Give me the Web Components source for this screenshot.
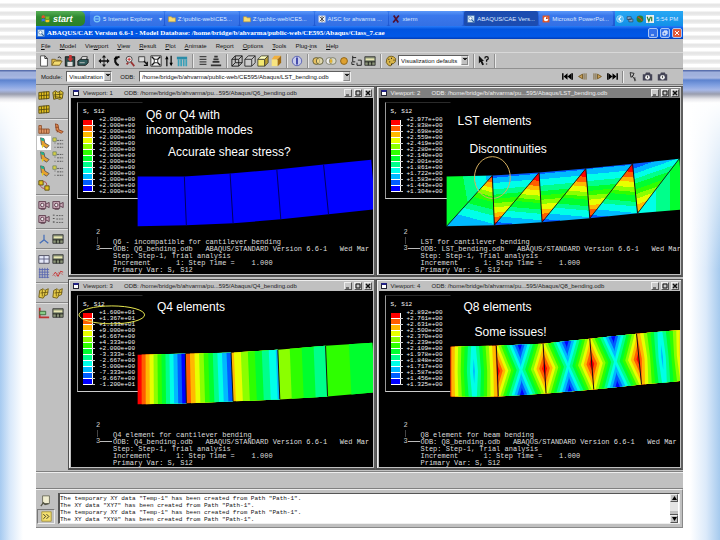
<!DOCTYPE html>
<html lang="en">
<head>
<meta charset="utf-8">
<title>ABAQUS/CAE stress comparison</title>
<style>
body { margin: 0; font-family: "Liberation Sans", Arial, sans-serif; }
</style>
</head>
<body>
<slide-page>
  <app-window>
    <task-bar slot="tasks"></task-bar>
    <title-bar slot="title">ABAQUS/CAE Version 6.6-1 - Model Database: /home/bridge/b/ahvarma/public-web/CE595/Abaqus/Class_7.cae</title-bar>
    <menu-bar slot="bars"></menu-bar>
    <tool-bar slot="bars"></tool-bar>
    <context-bar slot="bars"></context-bar>
    <tool-box slot="tools"></tool-box>
    <view-port number="1" file="Q6" plot="flat" desc="Q6 - incompatible for cantilever bending" version="6.6-1"
      legend="+2.000e+00 +2.000e+00 +2.000e+00 +2.000e+00 +2.000e+00 +2.000e+00 +2.000e+00 +2.000e+00 +2.000e+00 +2.000e+00 +2.000e+00 +2.000e+00 +2.000e+00">
      <slide-note style="--x:75px;--y:10px">Q6 or Q4 with<br>incompatible modes</slide-note>
      <slide-note style="--x:97px;--y:47px">Accurate shear stress?</slide-note>
    </view-port>
    <view-port number="2" file="LST" plot="lst" active desc="LST for cantilever bending" version="6.6-1"
      legend="+2.977e+00 +2.838e+00 +2.698e+00 +2.559e+00 +2.419e+00 +2.280e+00 +2.140e+00 +2.001e+00 +1.861e+00 +1.722e+00 +1.583e+00 +1.443e+00 +1.304e+00">
      <slide-note style="--x:79px;--y:16px">LST elements</slide-note>
      <slide-note style="--x:91px;--y:44px">Discontinuities</slide-note>
    </view-port>
    <view-port number="3" file="Q4" plot="linear" desc="Q4 element for cantilever bending" version="6.6-1"
      legend="+1.600e+01 +1.367e+01 +1.133e+01 +9.000e+00 +6.667e+00 +4.333e+00 +2.000e+00 -3.333e-01 -2.667e+00 -5.000e+00 -7.333e+00 -9.667e+00 -1.200e+01">
      <slide-note style="--x:86px;--y:9px">Q4 elements</slide-note>
    </view-port>
    <view-port number="4" file="Q8" plot="quadratic" desc="Q8 element for beam bending" version="6.6-1"
      legend="+2.892e+00 +2.761e+00 +2.631e+00 +2.500e+00 +2.370e+00 +2.239e+00 +2.109e+00 +1.978e+00 +1.848e+00 +1.717e+00 +1.587e+00 +1.456e+00 +1.325e+00">
      <slide-note style="--x:85px;--y:9px">Q8 elements</slide-note>
      <slide-note style="--x:96px;--y:34px">Some issues!</slide-note>
    </view-port>
    <message-area slot="log">The temporary XY data "Temp-1" has been created from Path "Path-1".
The XY data "XY7" has been created from Path "Path-1".
The temporary XY data "Temp-1" has been created from Path "Path-1".
The XY data "XY8" has been created from Path "Path-1".</message-area>
  </app-window>
</slide-page>

<script>
const RAMP = ['#ff0000','#ff5d00','#ffb900','#e8ff00','#8bff00','#2eff00','#00ff2e','#00ff8b','#00ffe8','#00b9ff','#005dff','#0000ff'];

const define = (name, html, setup) => customElements.define(name, class extends HTMLElement {
  connectedCallback() {
    if (this.shadowRoot) return;
    const root = this.attachShadow({ mode: 'open' });
    root.innerHTML = typeof html === 'function' ? html(this) : html;
    if (setup) setup(this, root);
  }
});

/* 14 x 14 glyphs */
const K = 'stroke="#111" fill="none"';
const ICONS = {
  page: `<path d="M3 1h5l3 3v9H3z" fill="#fff" stroke="#444"/><path d="M8 1v3h3" ${K}/>`,
  open: `<path d="M1 12V5h4l1 1h5v2" fill="#e8c048" stroke="#776020"/><path d="M1 12l3-5h9l-3 5z" fill="#f4dc70" stroke="#776020"/><path d="M8 3q2-2 4 1" ${K}/>`,
  save: `<path d="M1.500 2h11v11h-11z" fill="#2d4a48" stroke="#111"/><path d="M4 8h6v5H4z" fill="#ddd"/><path d="M6 0h3v4h2L7.500 8 4 4h2z" fill="#c33"/>`,
  print: `<path d="M4 6l2-4h6l-1 4" fill="#fff" stroke="#222"/><path d="M1 7l3-2h9v4l-3 3H1z" fill="#2f5c5c" stroke="#111"/><path d="M3 9h6" stroke="#ccc"/>`,
  pan: `<path d="M7 0l2.500 3h-2v3h3V4l3 3-3 3V8h-3v3h2L7 14l-2.500-3h2V8h-3v2l-3-3 3-3v2h3V3h-2z" fill="#111"/>`,
  rotate: `<path d="M10 2Q4 3 5 8q1 3 4 4" stroke="#111" stroke-width="2.500" fill="none"/><path d="M3 5l3-4 2 4z"/>`,
  magnify: `<circle cx="6" cy="5" r="3.500" fill="#eee" stroke="#333"/><path d="M6 3v4M4 5h4" stroke="#c22"/><path d="M8 8l4 5M3 11l2-2" stroke="#933" stroke-width="2"/>`,
  boxzoom: `<path d="M2 2h7v6H2z" fill="#ddd" stroke="#333"/><path d="M8 7l4 4M12 8v4H8" stroke="#111" stroke-width="1.500" fill="none"/>`,
  fit: `<path d="M1 1h12v12H1z" fill="#eee" stroke="#222"/><path d="M2 2l10 10M12 2L2 12" stroke="#111" stroke-width="1.500"/><path d="M5 5h4v4H5z" fill="#fff" stroke="#222"/>`,
  cycle: `<path d="M4.500 13V3M9.500 1v10" stroke="#111" stroke-width="1.500"/><path d="M2.500 5l2-4 2 4zM7.500 9l2 4 2-4z"/>`,
  views: `<path d="M1 2h12v3H1z" fill="#2a8ca8"/><path d="M3 5v8M6 5v8M9 5v8M12 5v8" stroke="#3aa0b8" stroke-width="2"/>`,
  list: `<path d="M3 2h8M3 5h8M3 8h8M3 11h8" stroke="#444" stroke-width="1.500"/>`,
  persp: `<path d="M5 2h4M4 5h6M3 8h8M1 12h12" stroke="#333" stroke-width="2"/>`,
  wire: `<path d="M1 5h8v8H1zM5 1h8v8H5zM1 5l4-4M9 5l4-4M1 13l4-4M9 13l4-4" ${K}/>`,
  hidden: `<path d="M1 5h8v8H1zM1 5l4-4h8v8l-4 4M9 5l4-4" stroke="#222" fill="#ccc"/>`,
  filled: `<path d="M1 5h8v8H1z" fill="#f4e870" stroke="#443"/><path d="M1 5l4-4h8L9 5z" fill="#ffffc0" stroke="#443"/><path d="M9 5l4-4v8l-4 4z" fill="#b89c30" stroke="#443"/>`,
  shaded: `<path d="M2 5h7v8H2z" fill="#f8e480"/><path d="M2 5l3-4h8L9 5z" fill="#f0b040"/><path d="M9 5l4-4v8l-4 4z" fill="#a06a10"/>`,
  info: `<circle cx="7" cy="7" r="5.500" fill="#c8ccec" stroke="#5058b0"/><path d="M7 3v8" stroke="#3038a0" stroke-width="2"/>`,
  union: `<circle cx="5" cy="7" r="4" fill="#e8c060" stroke="#553"/><circle cx="9" cy="7" r="4" fill="#f4e4a0" fill-opacity=".6" stroke="#553"/>`,
  inter: `<circle cx="5" cy="7" r="4" fill="#eee" stroke="#776"/><circle cx="9" cy="7" r="4" fill="#eec" fill-opacity=".6" stroke="#776"/><path d="M7 4q3 3 0 6-3-3 0-6" fill="#e0b030"/>`,
  ball: `<circle cx="7" cy="7" r="4" fill="#dda030" stroke="#865c10"/>`,
  swap: `<path d="M2 1v7h3M2 3h4M8 6h4v6H7V9" ${K}/><path d="M4 11H1V8" ${K}/>`,
  table: `<path d="M1 2h12v10H1z" fill="#8a9478" stroke="#333"/><path d="M2 4h10v2H2z" fill="#e8e4b0"/><path d="M1 8h12M5 8v4M9 8v4" ${K}/>`,
  palette: `<path d="M2 5q2-5 8-3 4 2 2 6-2 3-4 2 0 4-4 2-4-3-2-7" fill="#d8b448" stroke="#6b5410"/><path d="M4 5h1M7 4h1M10 6h1M5 8h1M7 11h1" stroke="#222" stroke-width="1.500"/>`,
  help: `<path d="M1 1l6 6H5l2 4-2 1-2-4-2 2z" fill="#111"/><path d="M8 4q0-2 2-2t2 2q0 1-2 2v2M10 10v1" stroke="#111" stroke-width="1.500" fill="none"/>`,
  first: `<path d="M1 3v8M13 3v8" stroke="#111" stroke-width="2"/><path d="M2 7l5-4v8zM7 7l5-4v8z"/>`,
  last: `<path d="M1 3v8M13 3v8" stroke="#111" stroke-width="2"/><path d="M12 7L7 3v8zM7 7L2 3v8z"/>`,
  prev: `<path d="M2 7l5-3v6z" fill="#c8a058" stroke="#6b4c10"/><path d="M9 3v8M11.500 3v8" stroke="#6b4c10"/>`,
  next: `<path d="M12 7L7 4v6z" fill="#c8a058" stroke="#6b4c10"/><path d="M5 3v8M2.500 3v8" stroke="#6b4c10"/>`,
  probe: `<path d="M4 2l5 1-2 4 4 5M4 2l1 6 3-2M10 8v5" ${K}/>`,
  camera: `<path d="M1 4h3l1-2h5l1 2h2v8H1z" fill="#445"/><circle cx="7" cy="8" r="3" fill="#eee"/><path d="M7 6v3" stroke="#333"/>`,
  mesh: `<path d="M1 4l12-1v8L1 12z" fill="#e4c020" stroke="#54480c"/><path d="M1 8l12-1M4 4v8M7 3v9M10 3v9" stroke="#54480c"/>`,
  meshes: `<path d="M1 4l3-2 3 2 3-2 3 2-1 7-3 1-3-1-4 1z" fill="#e4c83a" stroke="#54480c"/><path d="M2 7l10-1M4 3v8M9 3v8M3 9l8 1" stroke="#54480c"/>`,
  deform: `<path d="M2 4l4-2 2 2 4-2-1 7-3 1-2 3-5-1z" fill="#e8cc48" stroke="#6b5810"/><path d="M3 7l9-1M5 3v8M9 4L7 11" stroke="#6b5810"/>`,
  beam: `<path d="M1 3v9h12V7H4V3z" fill="#e09868" stroke="#8a4c28"/><path d="M4 7v5M7 7v5M10 7v5M1 7h3" stroke="#8a4c28"/>`,
  bent: `<path d="M4 1l3 1 1 6 5 2-2 2-6-3z" fill="#e08c50" stroke="#8a4020"/><path d="M4 5h3M7 8l-1 3" stroke="#8a4020"/>`,
  contour: `<path d="M3 1l4 1 1 5 5 3-3 3-6-4z" fill="#e8a030" stroke="#555"/><path d="M3 1l4 1v3L4 4z" fill="#20b090"/><path d="M4 9l3 1-2 3z" fill="#e8d020"/>`,
  opts: `<path d="M1 1h4v4H1z" fill="#d8d040" stroke="#786"/><path d="M6 4h7M6 8h7M6 12h7" stroke="#444" stroke-dasharray="2 1"/><path d="M3 7h1M3 12h1" stroke="#444"/>`,
  link: `<path d="M1 2h5v5H1zM8 8h5v5H8z" fill="#e4c020" stroke="#54480c"/><path d="M6 3q5 0 4 5M3 7q0 4 5 4" stroke="#a44" fill="none"/>`,
  film: `<path d="M1 3h8v8H1zM9 6l4-2v6l-4-2" fill="#caaab8" stroke="#534"/><circle cx="5" cy="7" r="2" fill="#eee" stroke="#534"/><path d="M3 12h5" stroke="#534"/>`,
  dots: `<path d="M2 2v10" stroke="#333" stroke-dasharray="1 3" stroke-width="2"/><path d="M5 3h8M5 7h8M5 11h8" stroke="#555" stroke-dasharray="2 1"/>`,
  axes: `<path d="M7 2v6L2 12M7 8l5 4" stroke="#4870b8" stroke-width="1.500" fill="none"/>`,
  grid: `<path d="M1 3h12v9H1z" fill="#e4e8f8" stroke="#445"/><path d="M1 7h12M7 3v9" stroke="#557"/>`,
  lattice: `<path d="M2 1v12M5 1v12M8 1v12M11 1v12M1 3h12M1 6h12M1 9h12M1 12h12" stroke="#5464b0"/>`,
  curve: `<path d="M1 10l3-4 3 5 3-6 3 1" stroke="#c22" fill="none"/><path d="M1 8l3 3 4-5 5 3" stroke="#b77" fill="none"/>`,
  cut: `<path d="M2 1v11h11" stroke="#b33" stroke-width="2" fill="none"/><path d="M2 5h7v4H2z" fill="#8c8" stroke="#363"/>`,
  log: `<path d="M3 1h8v9H3z" fill="#f0edd0" stroke="#665"/><path d="M1 13l3-4 2 2 4-1" stroke="#554" fill="none" stroke-width="1.500"/>`,
  prompt: `<path d="M1 1h12v12H1z" fill="#f4e070" stroke="#a08c30"/><path d="M3 4l3 3-3 3M7 4l3 3-3 3" ${K}/>`,
  flag: `<path d="M1 3q3-2 5 0v4q-2-2-5 0z" fill="#e8502c"/><path d="M7 3q3 2 6 0v4q-3 2-6 0z" fill="#7cc02c"/><path d="M1 8q3-2 5 0v4q-2-2-5 0z" fill="#3c74e0"/><path d="M7 8q3 2 6 0v4q-3 2-6 0z" fill="#f8c820"/>`,
  ie: `<circle cx="7" cy="7" r="5" fill="none" stroke="#7cc8f8" stroke-width="2"/><path d="M3 7h8" stroke="#7cc8f8" stroke-width="2"/>`,
  folder: `<path d="M1 3h5l1 2h6v7H1z" fill="#f8dc70" stroke="#c09830"/>`,
  doc: `<path d="M1 1h12v12H1z" fill="#eee"/><path d="M3 3l8 8M11 3l-8 8M7 2v10" stroke="#444" stroke-width="1.500"/>`,
  xterm: `<path d="M3 1l8 12M12 1L2 13" stroke="#501030" stroke-width="3"/>`,
  cae: `<path d="M1 1h12v12H1z" fill="#d8ecf8" stroke="#3a6ca8"/><circle cx="6" cy="6" r="3" fill="#fff" stroke="#2860a0"/><path d="M8 8l4 4" stroke="#2860a0" stroke-width="2"/>`,
  ppt: `<path d="M1 1h12v12H1z" fill="#e05828"/><circle cx="7" cy="7" r="4" fill="#fff"/><path d="M7 7V4h3v3z" fill="#c03810"/>`,
  back: `<circle cx="7" cy="7" r="6" fill="#50b8f4" stroke="#d0ecff"/><path d="M9 3L5 7l4 4" stroke="#fff" stroke-width="2" fill="none"/>`,
  net: `<path d="M2 3h7v5H2zM5 7h7v5H5z" fill="#88a8c8" stroke="#234"/>`,
  globe: `<circle cx="7" cy="7" r="6" fill="#2c8030"/><path d="M3 3q5 2 8 7" stroke="#d84020" stroke-width="2" fill="none"/>`,
  vnc: `<path d="M0 0h14v14H0z" fill="#eee"/><path d="M2 3l3 8 3-8M10 3v8" stroke="#2a8030" stroke-width="2" fill="none"/>`
};

define('ui-icon', el => `<style>:host{display:block;width:var(--icon,12px);height:var(--icon,12px);flex:none}svg{display:block;width:100%;height:100%}</style>
<svg viewBox="0 0 14 14" aria-hidden="true">${ICONS[el.getAttribute('name')]}</svg>`);

define('slide-page', `<style>
:host{display:block;box-sizing:border-box;min-height:100vh;padding:11px 37px 12px 36px;
 background:
 linear-gradient(#5a70ae 0 1px,#9fb0dc 2px 5px,#a9b8e2 8px,#5c83cf 10px,#7f9fe0 15px,#a6b8e8 20px,#9a9eae 24px,#e8e8ec 29px,#fff 33px) 0 70px/100% 33px no-repeat,
 repeating-linear-gradient(#fff 0 3px,#e6e6e6 4px 6px,#f4f4f4 8px) 0 0/100% 70px no-repeat,
 linear-gradient(#fff 0,#fff0 170px) 0 100px/100% 170px no-repeat,
 linear-gradient(90deg,#a6caf0 0,#d8e8fa 10px,#fff 23px,#fff calc(100% - 30px),#dceafa calc(100% - 14px),#a6caee 100%)}
</style><slot></slot>`);

define('app-window', `<style>
:host{display:flex;flex-direction:column;min-height:calc(100vh - 23px);background:#c0c0c0}
.work{display:grid;grid-template-columns:32px 1fr;flex:1;border-top:1px solid #808080}
.views{display:grid;grid-template-columns:repeat(2,minmax(0,1fr));grid-auto-rows:1fr;background:#c0c0c0}
.prompt{height:16px;border-top:1px solid #808080;border-bottom:1px solid #808080;box-shadow:inset 0 1px #eee}
</style>
<slot name="tasks"></slot><slot name="title"></slot><slot name="bars"></slot>
<div class="work"><slot name="tools"></slot><div class="views"><slot></slot></div></div>
<div class="prompt"></div><slot name="log"></slot>`);

define('task-bar', () => {
  const items = [['ie','5 Internet Explorer','▾'],['folder','Z:\\public-web\\CE5...'],['folder','Z:\\public-web\\CE5...'],['doc','AISC for ahvarma ...'],['xterm','xterm'],['cae','ABAQUS/CAE Vers...','','on'],['ppt','Microsoft PowerPoi...']];
  return `<style>
:host{display:grid;grid-template-columns:49px 1fr 68px;height:15px;background:linear-gradient(#3c80f0,#2460dc 40%,#2058d0);font-size:6px;color:#dce8ff}
button{font:inherit;color:inherit;border:0;padding:0;display:flex;align-items:center;white-space:nowrap}
.start{background:linear-gradient(#58b058,#2f8a30 40%,#2c8028);border-radius:0 5px 5px 0;font:italic bold 9px "Liberation Sans",sans-serif;color:#fff;padding-left:5px;gap:3px;--icon:9px}
.tasks{display:grid;grid-template-columns:repeat(7,minmax(0,1fr));gap:1px;padding-left:5px;margin-right:2px}
.tasks button{background:linear-gradient(#5c98f8,#3a78ec 30%,#3470e4);border-radius:2px;padding-left:3px;gap:2px;--icon:8px}
.tasks .on{background:#1c4cb0}
i{margin-left:auto;padding-right:2px;font-style:normal}
.tray{display:flex;align-items:center;gap:2px;padding-left:1px;background:linear-gradient(#28a8f4,#1290e8);--icon:8px}
</style><button class="start"><ui-icon name="flag"></ui-icon>start</button>
<div class="tasks">${items.map(([n,t,m,c]) => `<button class="${c||''}"><ui-icon name="${n}"></ui-icon>${t}${m?`<i>${m}</i>`:''}</button>`).join('')}</div>
<div class="tray"><ui-icon name="back"></ui-icon><ui-icon name="net"></ui-icon><ui-icon name="globe"></ui-icon><ui-icon name="vnc"></ui-icon><time>5:54 PM</time></div>`;
});

define('title-bar', `<style>
:host{display:flex;align-items:center;height:13px;padding:0 1px;gap:2px;background:linear-gradient(#2a7cf8,#0054e0 25%,#0058e8 80%,#003cb8);color:#fff;font:bold 7px "Liberation Serif",serif;--icon:8px}
span{flex:1;white-space:nowrap}
button{width:10px;height:10px;padding:0;border:1px solid #a8c4f4;border-radius:2px;background:#3470e8;display:grid;place-items:center}
.x{background:#e05838}
svg{width:6px;height:6px;stroke:#fff;fill:none}
</style><ui-icon name="cae"></ui-icon><span><slot></slot></span>
<button aria-label="Minimize"><svg viewBox="0 0 6 6"><path d="M1 5h3"/></svg></button>
<button aria-label="Restore"><svg viewBox="0 0 6 6"><path d="M1 2h3v3H1zM2 1h3v3"/></svg></button>
<button class="x" aria-label="Close"><svg viewBox="0 0 6 6"><path d="M1 1l4 4M5 1L1 5"/></svg></button>`);

define('menu-bar', () => `<style>
:host{display:flex;gap:9px;height:13px;padding:0 5px;align-items:center;border-bottom:1px solid #d8d8d8}
button{font:6px "Liberation Sans",sans-serif;color:#111;border:0;background:none;padding:0}
u{text-underline-offset:1px}
</style>${['*File','*Model','Vie*wport','*View','*Result','*Plot','*Animate','Re*port','*Options','*Tools','Plug-*ins','*Help'].map(t => `<button>${t.replace(/\*(.)/,'<u>$1</u>')}</button>`).join('')}`);

const SELECT = `select{appearance:none;font:6px "Liberation Sans",sans-serif;color:#111;border:1px solid;border-color:#606060 #eee #eee #606060;border-radius:0;margin:0;height:11px;padding:0 7px 0 2px;min-width:0;background:#fff}
.pick{position:relative;display:flex}
.pick select{flex:1}
.pick::after{content:"";position:absolute;right:1px;top:1px;bottom:1px;width:7px;background:conic-gradient(from 315deg at 50% 70%,#222 90deg,#0000 0) 1px 1px/4px 4px no-repeat,#c0c0c0;border:1px outset #ddd;box-sizing:border-box;pointer-events:none}
`;

define('tool-bar', () => {
  const groups = ['page open save print','pan rotate magnify boxzoom fit cycle views','list persp','wire hidden filled shaded','info','union inter ball swap table','palette'];
  return `<style>${SELECT}
:host{display:flex;align-items:center;height:15px;border-bottom:1px solid #909090;--icon:12px;padding-left:2px}
.g{display:flex;align-items:center;gap:1px;padding:0 4px 0 0;margin-right:4px;border-right:1px solid #909090;box-shadow:1px 0 #e8e8e8;height:14px}
.g button{border:0;padding:0;background:none}
.pick{width:71px}
</style>${groups.map((g,i) => `<div class="g">${g.split(' ').map(n => `<button aria-label="${n}"><ui-icon name="${n}"></ui-icon></button>`).join('')}${i===6?'<span class="pick"><select aria-label="Color defaults"><option>Visualization defaults</option></select></span>':''}</div>`).join('')}
<div class="g"><button aria-label="help"><ui-icon name="help"></ui-icon></button></div>`;
});

define('context-bar', `<style>${SELECT}
:host{display:flex;align-items:center;height:15px;padding:0 15px 0 5px;gap:4px;font-size:6px;color:#111;--icon:11px}
.m{width:46px;margin-right:4px}.o{width:212px}
.play{display:flex;align-items:center;gap:4px;margin-left:auto}
.play button{border:0;padding:0;background:none}
.s{width:1px;height:12px;background:#888;box-shadow:1px 0 #eee}
</style><label for="m">Module:</label><span class="pick m"><select id="m"><option>Visualization</option></select></span>
<label for="o">ODB:</label><span class="pick o"><select id="o"><option>/home/bridge/b/ahvarma/public-web/CE595/Abaqus/LST_bending.odb</option></select></span>
<div class="play"><button aria-label="First"><ui-icon name="first"></ui-icon></button><button aria-label="Previous"><ui-icon name="prev"></ui-icon></button><button aria-label="Next"><ui-icon name="next"></ui-icon></button><button aria-label="Last"><ui-icon name="last"></ui-icon></button><span class="s"></span><button aria-label="Probe"><ui-icon name="probe"></ui-icon></button><button aria-label="Time camera"><ui-icon name="camera"></ui-icon></button><button aria-label="Camera"><ui-icon name="camera"></ui-icon></button></div>`);

define('tool-box', () => {
  const groups = ['mesh meshes mesh','beam bent contour* opts contour opts contour opts link','film film film dots','axes table','grid table lattice curve','deform deform','cut table'];
  return `<style>
:host{display:block}
.g{display:grid;grid-template-columns:14px 14px;grid-auto-rows:14px;padding:3px 0 2px 1px;border-bottom:1px solid #888;box-shadow:0 1px #e0e0e0}
.g:last-child{border:0;box-shadow:none}
button{border:0;padding:1px;background:none}
.on{background:#fff}
</style>${groups.map(g => `<div class="g">${g.split(' ').map(n => { const b = n.replace('*',''); return `<button class="${b===n?'':'on'}" aria-label="${b}"><ui-icon name="${b}"></ui-icon></button>`; }).join('')}</div>`).join('')}`;
});

define('slide-note', `<style>:host{position:absolute;left:var(--x);top:var(--y);font:12px/15px "Liberation Sans",Arial,sans-serif;color:#fff;white-space:nowrap}</style><slot></slot>`);

define('color-legend', el => {
  const v = el.getAttribute('values').split(' ');
  return `<style>
:host{display:block;box-sizing:border-box;width:66px;margin:4px 0 0 6px;padding:6px 0 3px 5px;border:1px solid #fff;border-color:#2a2a2a #0000 #ccc #999;font:6px/6px "Liberation Mono",monospace;color:#f4f4f4}
.t{padding-bottom:2px}
.row{display:flex;gap:3px}
.bar{width:13px;margin-top:3px}
.bar b{display:block;height:5px;width:9px;border-bottom:1px solid #fff;border-right:1px solid #fff;position:relative}
.bar b::after{content:"";display:block;position:absolute;left:9px;bottom:-1px;width:3px;height:1px;background:#ccc}
</style><div class="t">S, S12</div><div class="row"><div class="bar">${RAMP.map(c => `<b style="background:${c}"></b>`).join('')}</div><div>${v.map(x => `<div>${x}</div>`).join('')}</div></div>`;
});

/* Beam contour plots. Each beam is five elements given by its top and bottom node rows. */
const BEAMS = {
  flat: { box: '71 97 302 177', top: [[138,176],[185,176],[231,173],[278,169],[325,164],[373,159]], bot: [[138,226],[187,225],[234,223],[282,219],[330,214],[377,209]] },
  lst: { box: '378 97 302 177', top: [[446,176],[492,175],[539,172],[586,168],[633,163],[680,158]], bot: [[446,226],[494,225],[542,222],[590,218],[638,213],[684,209]] },
  linear: { box: '71 291 302 177', top: [[138,355],[186,354],[232,353],[279,350],[327,346],[374,343]], bot: [[138,405],[187,404],[234,402],[281,400],[329,397],[377,393]] },
  quadratic: { box: '378 291 302 177', top: [[450,347],[496,346],[543,344],[590,339],[637,334],[684,330]], bot: [[450,397],[498,397],[546,394],[594,390],[642,385],[688,381]] }
};
const poly = (pts, fill) => `<polygon points="${pts.map(p => p.map(n => +n.toFixed(2)).join()).join(' ')}" fill="${fill}"/>`;
const band = (stops, id, x2 = 0, y2 = 1, x1 = 0, y1 = 0) => {
  const n = stops.length;
  return `<linearGradient id="${id}" x1="${x1}" y1="${y1}" x2="${x2}" y2="${y2}">${stops.map(([c, a], i) => `<stop offset="${a}" stop-color="${RAMP[c]}"/><stop offset="${i < n - 1 ? stops[i + 1][1] : 1}" stop-color="${RAMP[c]}"/>`).join('')}</linearGradient>`;
};
function drawBeam(kind) {
  const { box, top, bot } = BEAMS[kind];
  const at = (i, u, v) => [0, 1].map(k => {
    const a = top[i][k] + (top[i + 1][k] - top[i][k]) * u, b = bot[i][k] + (bot[i + 1][k] - bot[i][k]) * u;
    return a + (b - a) * v;
  });
  let s = '';
  if (kind === 'flat') s += poly([...top, ...[...bot].reverse()], '#0000ff');
  if (kind === 'linear') {
    const spans = [[0, 12], [1, 11], [2.6, 9.3], [4, 8], [5, 7]];
    spans.forEach(([a, b], i) => {
      for (let k = Math.floor(a); k < b; k++) {
        const u = Math.max(0, (k - a) / (b - a));
        s += poly([at(i, u, 0), at(i, 1, 0), at(i, 1, 1), at(i, u, 1)], RAMP[k]);
      }
    });
  }
  if (kind === 'quadratic') {
    for (let i = 0; i < 5; i++) {
      const side = w => i === 0 ? 1.7 : i === 4 ? 1 + w : 0.1 + 3.2 * w;
      const mid = w => i === 0 || i === 4 ? 9.3 - 0.6 * w : 8.5 + 3.3 * w;
      s += poly([at(i, 0, 0), at(i, 1, 0), at(i, 1, 1), at(i, 0, 1)], RAMP[0]);
      for (let k = 1; k < 12; k++) {
        const l = [], r = [];
        for (let j = 0; j <= 20; j++) {
          const v = j / 20, w = Math.abs(2 * v - 1), lo = side(w), hi = mid(w);
          const t = Math.min(1, Math.max(0, (k - lo) / (hi - lo))) / 2;
          l.push(at(i, t, v)); r.unshift(at(i, 1 - t, v));
        }
        s += poly([...l, ...r], RAMP[k]);
      }
    }
  }
  if (kind === 'lst') {
    const down = [[10,0],[9,.1],[8,.2],[7,.32],[6,.42],[5,.5],[4,.58],[3,.66],[2,.76],[1,.84],[0,.94]];
    const up = [[0,0],[1,.08],[2,.18],[3,.26],[4,.36],[5,.44],[6,.5],[7,.62],[8,.7],[9,.82],[10,.93]];
    s += `<defs>${band(down,'d',.08)}${band(up,'u',-.08)}${band([[6,0],[7,.38],[8,.62],[9,.86]],'a',1,0,0,.2)}${band([[0,0],[1,.06],[2,.14],[3,.24],[4,.32],[5,.4],[6,.5],[7,.64],[8,.75],[9,.9]],'b',.75,1,1,0)}${band([[11,0],[10,.07],[9,.16],[8,.25],[7,.34],[6,.42],[5,.52],[4,.6],[3,.68],[2,.78],[1,.9]],'e',.35,1,.05,0)}${band([[8,0],[7,.4],[6,.7]],'f',1,.2,0,.2)}</defs>`;
    for (let i = 0; i < 5; i++) {
      s += poly([top[i], top[i + 1], bot[i]], `url(#${i === 0 ? 'a' : i === 4 ? 'e' : 'd'})`);
      s += poly([top[i + 1], bot[i + 1], bot[i]], `url(#${i === 0 ? 'b' : i === 4 ? 'f' : 'u'})`);
      s += `<path d="M${bot[i]}L${top[i + 1]}" stroke="#111" stroke-width=".8"/>`;
    }
    s += '<ellipse cx="492" cy="177" rx="18" ry="21" fill="none" stroke="#d8b060"/>';
  }
  for (let i = 1; i < 5; i++) s += `<path d="M${top[i]}L${bot[i]}" stroke="${kind === 'flat' ? '#000060' : '#111'}" stroke-width="1"/>`;
  if (kind === 'linear') s += '<ellipse cx="112" cy="315" rx="33" ry="9" fill="none" stroke="#e8e850"/>';
  return `<svg viewBox="${box}" preserveAspectRatio="xMinYMin meet" aria-hidden="true">${s}</svg>`;
}
define('beam-plot', el => `<style>:host{position:absolute;inset:0}svg{display:block;width:100%;height:100%;overflow:visible}</style>${drawBeam(el.getAttribute('kind'))}`);

define('view-port', el => {
  const a = n => el.getAttribute(n), n = a('number');
  return `<style>
:host{display:flex;flex-direction:column;min-width:0;margin:1px 0 1px 0;border:1px solid #505050;border-right:2px solid #606060;border-bottom:2px solid #505050;padding:1px 1px 1px 2px;box-shadow:inset 1px 1px #eee}
header{display:flex;align-items:center;height:10px;padding:0 1px 0 2px;font-size:6px;color:#222;white-space:nowrap}
:host([active]) header{background:#808080;color:#eee}
.w{width:6px;height:6px;box-sizing:border-box;border:1px solid #223;border-top:2px solid #228;background:#fff;margin-right:4px}
.n{width:41px}.f{flex:1}
button{width:8px;height:8px;padding:0;margin-left:2px;background:#c8c8c8;border:1px solid;border-color:#eee #555 #555 #eee;display:grid;place-items:center}
svg{width:6px;height:6px;stroke:#111;fill:none}
.c{position:relative;flex:1;background:#000;overflow:hidden;display:flex;flex-direction:column}
pre{margin:auto 0 0 42px;font:7px/7px "Liberation Mono",monospace;color:#ddd;position:relative}
.tri{position:absolute;left:25px;bottom:14px;font:7px/8px "Liberation Mono",monospace;color:#ccc}
.tri div{height:16px}
.tri::after{content:"";position:absolute;left:4px;top:20px;width:12px;height:1px;background:#bbb}
.tri::before{content:"";position:absolute;left:1px;top:9px;width:1px;height:7px;background:#444}
</style>
<header><span class="w"></span><span class="n">Viewport: ${n}</span><span class="f">ODB: /home/bridge/b/ahvarma/pu...595/Abaqus/${a('file')}_bending.odb</span>
<button aria-label="Minimize"><svg viewBox="0 0 6 6"><path d="M1 5h3"/></svg></button><button aria-label="Maximize"><svg viewBox="0 0 6 6"><path d="M1 1h4v4H1z"/></svg></button><button aria-label="Close"><svg viewBox="0 0 6 6"><path d="M1 1l4 4M5 1L1 5" stroke-width="1.500"/></svg></button></header>
<div class="c"><color-legend values="${a('legend')}"></color-legend>
<div class="tri"><div>2</div><div>3</div></div>
<pre>${a('desc')}
ODB: ${a('file')}_bending.odb   ABAQUS/STANDARD Version ${a('version')}   Wed Mar
Step: Step-1, Trial analysis
Increment      1: Step Time =    1.000
Primary Var: S, S12</pre>
<beam-plot kind="${a('plot')}"></beam-plot><slot></slot></div>`;
});

define('message-area', `<style>
:host{display:grid;grid-template-columns:18px 1fr;gap:3px;padding:3px 2px 3px 1px;border-top:1px solid #eee;border-bottom:1px solid #888;border-right:1px solid #888}
.b{display:grid;grid-template-rows:1fr 1fr}
.b button{border:0;background:none;padding:0;display:grid;place-items:center}
.b button:last-child{border:1px solid;border-color:#777 #eee #eee #777}
.l{display:grid;grid-template-columns:1fr 8px;background:#fff;border:1px solid;border-color:#555 #eee #eee #555;border-left-width:2px;padding-right:1px}
.t{font:6px/7px "Liberation Mono",monospace;color:#111;white-space:pre;padding-top:1px}
.s{display:flex;flex-direction:column;background:#e4e4e4}
.s button{height:8px;padding:0;background:#c0c0c0;border:1px solid;border-color:#eee #555 #555 #eee;display:grid;place-items:center}
.s span{margin-top:auto;height:3px;background:#c0c0c0;border-bottom:1px solid #555}
svg{width:5px;height:4px}
</style><div class="b"><button aria-label="Message log"><ui-icon name="log"></ui-icon></button><button aria-label="Command line"><ui-icon name="prompt" style="--icon:11px"></ui-icon></button></div>
<div class="l"><div class="t" role="log"><slot></slot></div><div class="s"><button aria-label="Scroll up"><svg viewBox="0 0 5 4"><path d="M0 4l2.500-4L5 4z"/></svg></button><span></span><button aria-label="Scroll down"><svg viewBox="0 0 5 4"><path d="M0 0l2.500 4L5 0z"/></svg></button></div></div>`);
</script>
</body>
</html>
